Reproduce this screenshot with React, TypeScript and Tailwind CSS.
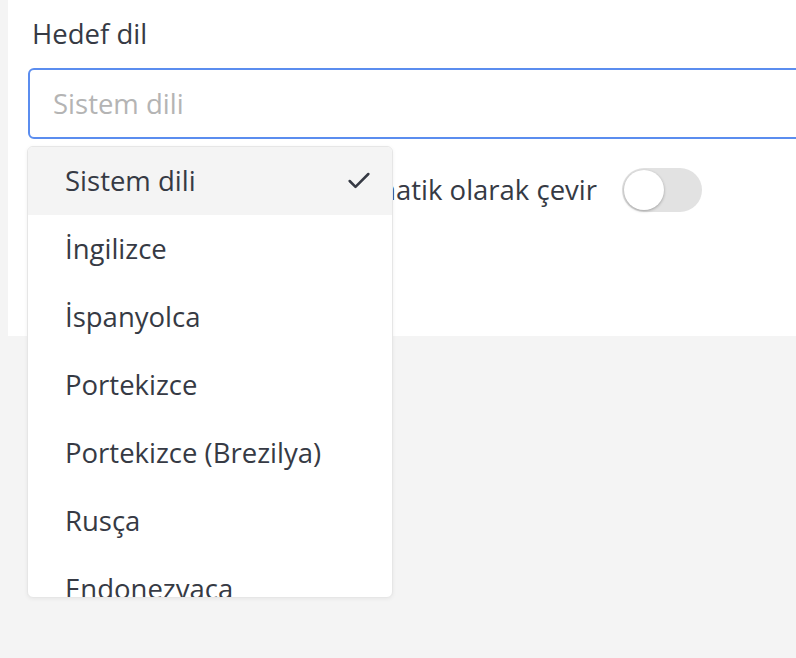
import { Check } from 'lucide-react';

const LANGUAGES = [
  'Sistem dili',
  'İngilizce',
  'İspanyolca',
  'Portekizce',
  'Portekizce (Brezilya)',
  'Rusça',
  'Endonezyaca',
];

function Toggle() {
  return (
    <div className="relative h-[44px] w-[80px] shrink-0 rounded-full bg-[#e2e2e2]">
      <div className="absolute left-[2px] top-[2px] h-[40px] w-[40px] rounded-full bg-white shadow-[0_1px_3px_rgba(0,0,0,0.3)]" />
    </div>
  );
}

function LanguageMenu({ selected }: { selected: string }) {
  return (
    <ul className="absolute left-[27px] top-[146px] h-[452px] w-[366px] overflow-hidden rounded-md border border-[#e6e6e6] bg-white shadow-[0_1px_4px_rgba(0,0,0,0.06)]">
      {LANGUAGES.map((lang) => (
        <li
          key={lang}
          className={
            lang === selected
              ? 'flex h-[68px] items-center justify-between bg-[#f4f4f4] pl-[37px] pr-[19px]'
              : 'flex h-[68px] items-center justify-between pl-[37px] pr-[19px]'
          }
        >
          <span className="leading-[36px]">{lang}</span>
          {lang === selected && <Check size={28} strokeWidth={2.2} className="text-[#363a44]" />}
        </li>
      ))}
    </ul>
  );
}

export default function App() {
  return (
    <div
      className="relative h-[658px] w-[796px] overflow-hidden bg-[#f4f4f4] text-[27.5px] text-[#363a44]"
      style={{ fontFamily: '"Open Sans", Lato, sans-serif' }}
    >
      <div className="ml-2 h-[336px] bg-white pt-[15px]">
        <label className="block pl-[24px] leading-[38px]">Hedef dil</label>
        <div className="ml-[20px] mt-[15px] flex h-[71px] w-[800px] items-center rounded-md border-2 border-[#5b8def] pl-[23px] leading-[36px] text-[#b4b4b4]">
          Sistem dili
        </div>
        <div className="mt-[29px] flex items-center gap-[25px]">
          <span className="w-[589px] whitespace-nowrap text-right leading-[36px]">
            Gelen mesajları otomatik olarak çevir
          </span>
          <Toggle />
        </div>
      </div>
      <LanguageMenu selected="Sistem dili" />
    </div>
  );
}
